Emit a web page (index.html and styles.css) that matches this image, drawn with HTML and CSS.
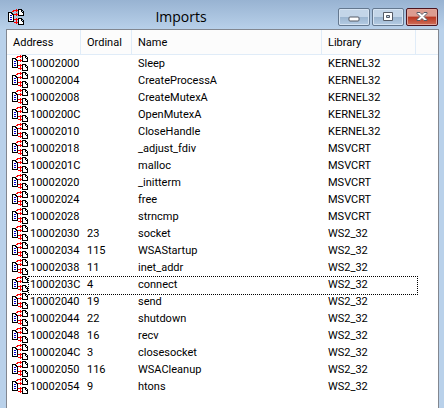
FILE: index.html
```html
<!DOCTYPE html>
<html lang="en">
<head>
    <meta charset="UTF-8">
    <title>Imports</title>
    <link rel="stylesheet" href="styles.css">
</head>
<body>
    <!-- import icon, shared by the title bar and the rows -->
    <svg class="defs" aria-hidden="true">
        <symbol id="imp" viewBox="0 0 16 16">
            <path fill="#fff" d="M1 4h3v2h1v6H1zM11 1h2v2h2v3h-4zM11 10h2v2h2v3h-4z"/>
            <path fill="#000" d="M0 3h4v1H0zM0 4h1v8H0zM0 12h6v1H0zM5 5h1v7H5zM3 4h2v1H3zM4 5h1v1H4zM10 0h4v1h-4zM10 1h1v5h-1zM10 6h6v1h-6zM15 2h1v4h-1zM13 1h2v1h-2zM13 2h1v1h-1zM14 3h1v1h-1zM10 9h4v1h-4zM10 10h1v5h-1zM10 15h6v1h-6zM15 11h1v4h-1zM13 10h2v1h-2zM13 11h1v1h-1zM14 12h1v1h-1z"/>
            <path fill="#00c" d="M2 6h2v1H2zM2 8h2v1H2zM2 10h2v1H2z"/>
            <path fill="#f00" d="M4 2h2v1H4zM5 1h5v1H5zM8 0h1v3H8zM6 5h4v1H6zM8 4h1v3H8zM6 10h4v1H6zM8 9h1v3H8zM6 13h4v1H6zM8 12h1v3H8z"/>
        </symbol>
    </svg>

    <div class="window">
        <div class="titlebar">
            <svg class="icon"><use href="#imp"/></svg>
            <h1>Imports</h1>
            <div class="buttons">
                <button class="btn" aria-label="Minimize">
                    <svg width="12" height="10"><rect x="1" y="5" width="10" height="4" rx="1" fill="#fff" stroke="#555b66"/></svg>
                </button>
                <button class="btn" aria-label="Maximize">
                    <svg width="12" height="10"><path fill="#fff" fill-rule="evenodd" stroke="#555b66" d="M1.5.5h9v8h-9zM4.500 3.500v2h3v-2z"/></svg>
                </button>
                <button class="btn close" aria-label="Close">
                    <svg width="12" height="10"><path fill="#fff" stroke="#555b66" d="M1 .5h3l2 2 2-2h3v1L8 4.500l3 3v1H8l-2-2-2 2H1v-1l3-3-3-3z"/></svg>
                </button>
            </div>
        </div>

        <div class="list">
            <table>
                <thead>
                    <tr>
                        <th class="c-addr">Address</th>
                        <th class="c-ord">Ordinal</th>
                        <th class="c-name">Name</th>
                        <th class="c-lib">Library</th>
                        <th class="c-rest"></th>
                    </tr>
                </thead>
                <tbody id="rows"></tbody>
            </table>
        </div>
    </div>

    <script src="imports.js"></script>
</body>
</html>
```
FILE: styles.css
```css
* { box-sizing: border-box; }
body {
    margin: 0;
    font-family: Roboto, "Liberation Sans", sans-serif;
    font-size: 11px;
    color: #000;
}
.defs { position: absolute; width: 0; height: 0; }
.window {
    display: flex;
    flex-direction: column;
    min-height: 100vh;
    padding: 0 5px 0 6px;
    background: linear-gradient(#98b3d2, #b9d1ea 30px);
}
.titlebar {
    display: flex;
    align-items: center;
    height: 29px;
    padding: 5px 1px 0 2px;
}
.icon {
    display: block;
    flex: none;
    width: 16px;
    height: 16px;
    shape-rendering: crispEdges;
}
.titlebar h1 {
    flex: 1;
    margin: 0;
    text-align: center;
    font: 14px/20px "Open Sans", sans-serif;
}
.buttons { display: flex; gap: 2px; }
.btn {
    display: flex;
    align-items: center;
    justify-content: center;
    width: 32px;
    height: 18px;
    padding: 0;
    border: 1px solid #64788f;
    border-radius: 2px;
    background: linear-gradient(#c3d5e8 50%, #9bb5d0 50%, #b5cce4);
    box-shadow: inset 0 0 0 1px #d5e3f2;
}
.close {
    border-color: #4c1520;
    background: linear-gradient(#dc9c90 45%, #b8341f 50%, #d0705a);
    box-shadow: inset 0 0 0 1px #e2a79c;
}
.list {
    flex: 1;
    border: 1px solid #828790;
    border-bottom: 0;
    background: #fff;
}
table {
    width: 100%;
    table-layout: fixed;
    border-collapse: separate;
    border-spacing: 0;
}
.c-addr { width: 74px; }
.c-ord { width: 51px; }
.c-name { width: 190px; }
.c-lib { width: 94px; }
th, td {
    padding: 0 0 0 6px;
    text-align: left;
    font-weight: normal;
    white-space: nowrap;
}
th {
    height: 25px;
    border-right: 1px solid #e0ecf8;
    border-bottom: 1px solid #e0ecf8;
    background: #fcfcfc;
}
.c-rest {
    padding: 0;
    border-right: 0;
}
td {
    height: 17px;
    line-height: 17px;
}
td:first-child { padding-left: 5px; }
.addr {
    display: flex;
    gap: 2px;
}
/* focus rectangle runs from the address text to the end of Library */
.focused td:first-child { position: relative; }
.focused td:first-child::after {
    content: "";
    position: absolute;
    top: 0;
    left: 21px;
    width: 388px;
    height: 17px;
    border: 1px dotted #000;
}
```
FILE: imports.js
```js
const imports = [
    ["10002000", "", "Sleep", "KERNEL32"],
    ["10002004", "", "CreateProcessA", "KERNEL32"],
    ["10002008", "", "CreateMutexA", "KERNEL32"],
    ["1000200C", "", "OpenMutexA", "KERNEL32"],
    ["10002010", "", "CloseHandle", "KERNEL32"],
    ["10002018", "", "_adjust_fdiv", "MSVCRT"],
    ["1000201C", "", "malloc", "MSVCRT"],
    ["10002020", "", "_initterm", "MSVCRT"],
    ["10002024", "", "free", "MSVCRT"],
    ["10002028", "", "strncmp", "MSVCRT"],
    ["10002030", "23", "socket", "WS2_32"],
    ["10002034", "115", "WSAStartup", "WS2_32"],
    ["10002038", "11", "inet_addr", "WS2_32"],
    ["1000203C", "4", "connect", "WS2_32"],
    ["10002040", "19", "send", "WS2_32"],
    ["10002044", "22", "shutdown", "WS2_32"],
    ["10002048", "16", "recv", "WS2_32"],
    ["1000204C", "3", "closesocket", "WS2_32"],
    ["10002050", "116", "WSACleanup", "WS2_32"],
    ["10002054", "9", "htons", "WS2_32"]
];
const focused = "1000203C";

document.getElementById("rows").innerHTML = imports.map(([addr, ord, name, lib]) => `
    <tr class="${addr === focused ? "focused" : ""}">
        <td><div class="addr"><svg class="icon"><use href="#imp"/></svg>${addr}</div></td>
        <td>${ord}</td><td>${name}</td><td>${lib}</td><td></td>
    </tr>`).join("");
```
